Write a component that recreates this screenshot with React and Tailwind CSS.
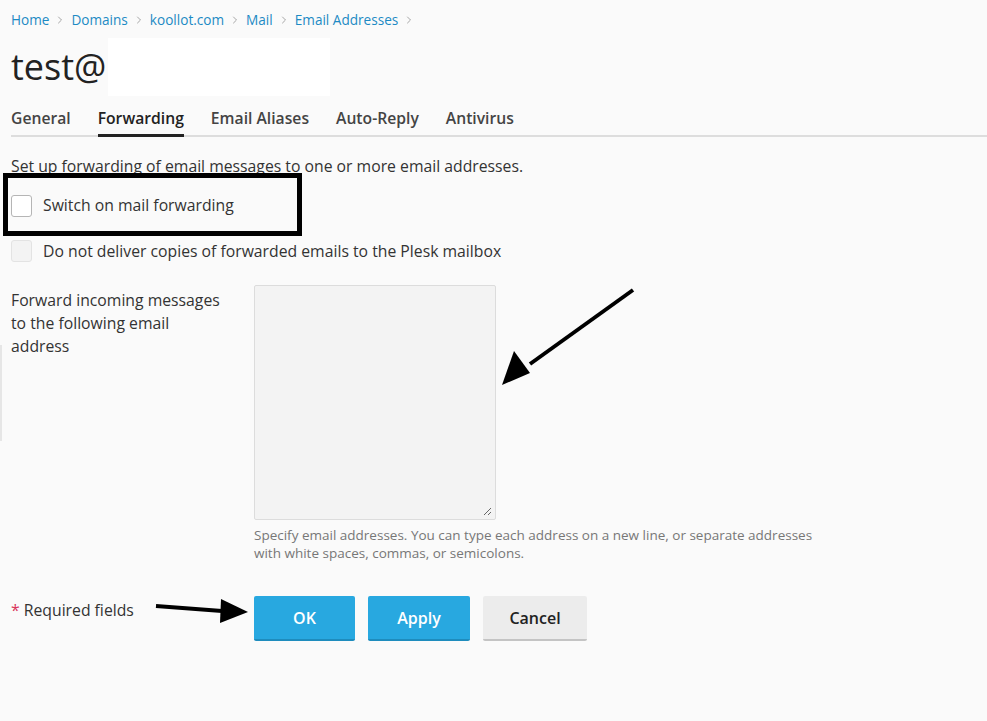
import { ChevronRight } from 'lucide-react';

const crumbs = ['Home', 'Domains', 'koollot.com', 'Mail', 'Email Addresses'];
const tabs = ['General', 'Forwarding', 'Email Aliases', 'Auto-Reply', 'Antivirus'];

export default function App() {
  return <div className="relative min-h-[721px] w-[987px] overflow-hidden bg-[#fafafa] pl-[11px] text-[#333] font-['Open_Sans',sans-serif]">
    <nav className="flex items-center gap-[5px] pt-[10px] text-[13.6px] leading-[20px] text-[#1d8ac4]">
      {crumbs.map((c) => <span key={c} className="flex items-center gap-[5px]">{c}<ChevronRight size={12} strokeWidth={1.5} className="text-[#8a8a8a]"/></span>)}
    </nav>
    <div className="mt-[8px] flex items-center">
      <h1 className="text-[36px] leading-[58px] text-[#222]">test@</h1>
      <div className="ml-[2px] h-[58px] w-[222px] bg-white"/>
    </div>
    <div className="mt-[11px] flex gap-[27px] border-b-2 border-[#ddd] text-[15.7px] leading-[22px] font-semibold">
      {tabs.map((t) => <div key={t} className={t === 'Forwarding' ? '-mb-[2px] border-b-[3px] border-[#222] pb-[5px] text-[#222]' : 'pb-[6px] text-[#444]'}>{t}</div>)}
    </div>
    <p className="mt-[18px] text-[15.75px] leading-[22px]">Set up forwarding of email messages to one or more email addresses.</p>
    <label className="mt-[17px] flex items-center gap-[11px] text-[15.75px]">
      <span className="h-[22px] w-[21px] rounded-[3px] border border-[#b5b5b5] bg-white"/>Switch on mail forwarding
    </label>
    <label className="mt-[22px] flex items-center gap-[11px] text-[15.75px]">
      <span className="h-[22px] w-[21px] rounded-[3px] border border-[#e3e3e3] bg-[#f3f3f3]"/>Do not deliver copies of forwarded emails to the Plesk mailbox
    </label>
    <div className="mt-[22px] flex">
      <div className="w-[243px] pt-[4px] text-[15.75px] leading-[23px]">Forward incoming messages<br/>to the following email<br/>address</div>
      <div>
        <div className="relative h-[235px] w-[242px] rounded-[2px] border border-[#dcdcdc] bg-[#f3f3f3]">
          <svg className="absolute bottom-[3px] right-[3px]" width="9" height="9" viewBox="0 0 9 9"><path d="M8 1L1 8M8 5L5 8" stroke="#666" strokeWidth="1"/></svg>
        </div>
        <p className="mt-[6px] text-[13.5px] leading-[18px] text-[#777]">Specify email addresses. You can type each address on a new line, or separate addresses<br/>with white spaces, commas, or semicolons.</p>
      </div>
    </div>
    <div className="mt-[34px] flex items-start">
      <div className="w-[243px] pt-[3px] text-[15.75px] leading-[22px]"><span className="text-[#d9345b]">*</span> Required fields</div>
      <div className="flex gap-[13px] text-[16px] font-semibold">
        <button className="h-[45px] w-[101px] rounded-[2px] border-b-2 border-[#1e8cbd] bg-[#28a8e0] text-white">OK</button>
        <button className="h-[45px] w-[102px] rounded-[2px] border-b-2 border-[#1e8cbd] bg-[#28a8e0] text-white">Apply</button>
        <button className="h-[45px] w-[104px] rounded-[2px] border-b-2 border-[#c4c4c4] bg-[#ececec] text-[#222]">Cancel</button>
      </div>
    </div>
    {/* annotations */}
    <div className="absolute left-[3px] top-[173px] h-[63px] w-[299px] border-[5px] border-black"/>
    <svg className="pointer-events-none absolute left-0 top-0" width="987" height="721">
      <line x1="633" y1="290" x2="530" y2="364" stroke="black" strokeWidth="4"/>
      <polygon points="502,385 514,351 530,373" fill="black"/>
      <line x1="156" y1="606" x2="222" y2="611" stroke="black" strokeWidth="4"/>
      <polygon points="248,612 221,599 220,623" fill="black"/>
    </svg>
    <div className="absolute left-0 top-[345px] h-[96px] w-[2px] bg-[#e6e6e6]"/>
  </div>;
}
